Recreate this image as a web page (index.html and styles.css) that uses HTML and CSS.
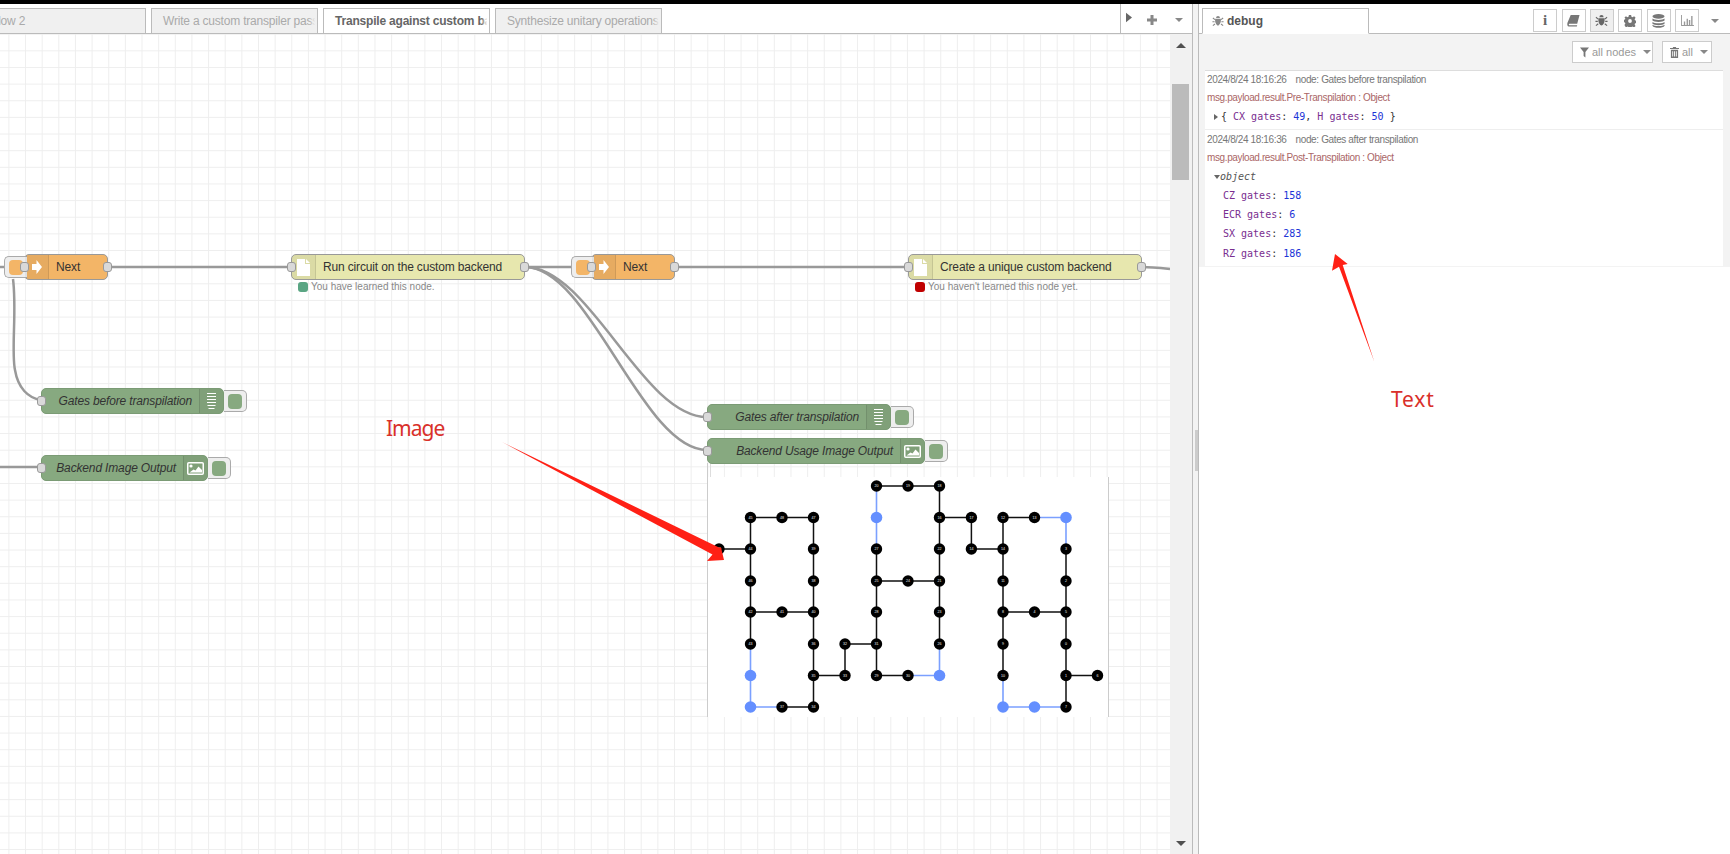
FILE: index.html
```html
<!DOCTYPE html>
<html lang="en">
<head>
<meta charset="utf-8">
<title>Node-RED flow</title>
<link rel="stylesheet" href="styles.css">
</head>
<body>
<div class="topbar"></div>
<div class="main">
  <section class="workspace">
    <div class="tabbar">
      <div class="tablist">
        <div class="tab tab-first"><span>Flow 2</span></div>
        <div class="tab"><span>Write a custom transpiler pass</span></div>
        <div class="tab tab-active"><span>Transpile against custom backend</span></div>
        <div class="tab"><span>Synthesize unitary operations</span></div>
      </div>
      <div class="tabtools">
        <svg class="tool-play" viewBox="0 0 7 11"><path d="M0 0l7 5.5L0 11z"/></svg>
        <svg class="tool-plus" viewBox="0 0 10 10"><path d="M3.5 0h3v3.5H10v3H6.5V10h-3V6.5H0v-3h3.5z"/></svg>
        <span class="caret"></span>
      </div>
    </div>
    <div class="canvas-row">
      <div class="canvas">
        <svg class="wires" width="1170" height="820" viewBox="0 34 1170 820">
          <defs>
            <pattern id="grid" x="8.4" y="33.7" width="16.64" height="16.64" patternUnits="userSpaceOnUse">
              <path d="M0.5 0V16.64M0 0.5H16.64" class="gridline"/>
            </pattern>
          </defs>
          <rect x="0" y="34" width="1170" height="820" fill="url(#grid)"/>
          <g class="wire">
            <path d="M0 267H4"/>
            <path d="M108 267H291"/>
            <path d="M525 267H571"/>
            <path d="M675 267H908"/>
            <path d="M1142 267C1150 267 1160 268 1170 269"/>
            <path d="M0 467H41"/>
            <path d="M13 279C17 310 11 352 15 370C18 388 28 398 41 400"/>
            <path d="M525 267C590 267 642 417 707 417"/>
            <path d="M525 267C590 267 642 450 707 450"/>
          </g>
        </svg>

        <div class="node node-next next-a">
          <div class="node-btn btn-left"></div>
          <i class="port port-l"></i>
          <div class="nicon nicon-l"><svg class="ico-link" viewBox="0 0 10 14"><path d="M0 4h4.500V0L10 7l-5.500 7v-4H0z"/></svg></div>
          <div class="nlabel">Next</div>
          <i class="port port-r"></i>
        </div>

        <div class="node node-comment run">
          <i class="port port-l"></i>
          <div class="nicon nicon-l"><svg class="ico-doc" viewBox="0 0 13 17"><path d="M0 0h8v5h5v12H0z"/><path d="M9 0l4 4H9z"/></svg></div>
          <div class="nlabel nlabel-wide">Run circuit on the custom backend</div>
          <i class="port port-r"></i>
          <div class="status"><b class="dot dot-green"></b><span>You have learned this node.</span></div>
        </div>

        <div class="node node-next next-b">
          <div class="node-btn btn-left"></div>
          <i class="port port-l"></i>
          <div class="nicon nicon-l"><svg class="ico-link" viewBox="0 0 10 14"><path d="M0 4h4.500V0L10 7l-5.500 7v-4H0z"/></svg></div>
          <div class="nlabel">Next</div>
          <i class="port port-r"></i>
        </div>

        <div class="node node-comment create">
          <i class="port port-l"></i>
          <div class="nicon nicon-l"><svg class="ico-doc" viewBox="0 0 13 17"><path d="M0 0h8v5h5v12H0z"/><path d="M9 0l4 4H9z"/></svg></div>
          <div class="nlabel nlabel-wide">Create a unique custom backend</div>
          <i class="port port-r"></i>
          <div class="status"><b class="dot dot-red"></b><span>You haven't learned this node yet.</span></div>
        </div>

        <div class="node node-debug gates-before">
          <i class="port port-l"></i>
          <div class="nlabel nlabel-end">Gates before transpilation</div>
          <div class="nicon nicon-r"><svg class="ico-list" viewBox="0 0 9 16"><path d="M0 .5h9M0 3.5h9M0 6.5h9M0 9.5h9M.5 12.5h8M1.5 15.500h6"/></svg></div>
          <div class="node-btn btn-right"></div>
        </div>

        <div class="node node-debug backend-out">
          <i class="port port-l"></i>
          <div class="nlabel nlabel-end">Backend Image Output</div>
          <div class="nicon nicon-r nicon-pic"><svg class="ico-pic" viewBox="0 0 17 13"><rect x=".75" y=".75" width="15.500" height="11.500" rx="1"/><circle cx="4" cy="4" r="1.600"/><path d="M2.500 10.500l4-3 2 1 3-4 3.500 3.500v2.500z"/></svg></div>
          <div class="node-btn btn-right"></div>
        </div>

        <div class="node node-debug gates-after">
          <i class="port port-l"></i>
          <div class="nlabel nlabel-end">Gates after transpilation</div>
          <div class="nicon nicon-r"><svg class="ico-list" viewBox="0 0 9 16"><path d="M0 .5h9M0 3.5h9M0 6.5h9M0 9.5h9M.5 12.5h8M1.5 15.500h6"/></svg></div>
          <div class="node-btn btn-right"></div>
        </div>

        <div class="node node-debug usage-out">
          <i class="port port-l"></i>
          <div class="nlabel nlabel-end">Backend Usage Image Output</div>
          <div class="nicon nicon-r nicon-pic"><svg class="ico-pic" viewBox="0 0 17 13"><rect x=".75" y=".75" width="15.500" height="11.500" rx="1"/><circle cx="4" cy="4" r="1.600"/><path d="M2.500 10.500l4-3 2 1 3-4 3.500 3.500v2.500z"/></svg></div>
          <div class="node-btn btn-right"></div>
        </div>

        <div class="img-stub"></div>
        <div class="output-image">
          <svg class="coupling" width="400" height="240" viewBox="0 0 400 240">
            <path class="edge" d="M168.500 9H231.500M231.500 9V167M42.500 40.500H105.500M231.500 40.500H263.400V72H295M295 40.500H326.500M11 72H42.500M42.500 40.500V167M105.500 40.500V230M168.500 72V198.500M295 40.500V198.500M358 72V230M168.500 104H231.500M42.500 135H105.500M295 135H358M137 167H168.500M137 167V198.500H105.500M168.500 198.500H200M358 198.500H389.500M74 230H105.500"/>
            <path class="edge-blue" d="M168.500 9V72M326.500 40.500H358V72M231.500 167V198.500H200M42.500 167V230H74M295 198.500V230H358"/>
            <g class="q">
              <circle cx="168.500" cy="9" r="5.700"/><circle cx="200" cy="9" r="5.700"/><circle cx="231.500" cy="9" r="5.700"/>
              <circle cx="42.500" cy="40.500" r="5.700"/><circle cx="74" cy="40.500" r="5.700"/><circle cx="105.500" cy="40.500" r="5.700"/><circle cx="231.500" cy="40.500" r="5.700"/><circle cx="263.400" cy="40.500" r="5.700"/><circle cx="295" cy="40.500" r="5.700"/><circle cx="326.500" cy="40.500" r="5.700"/>
              <circle cx="11" cy="72" r="5.700"/><circle cx="42.500" cy="72" r="5.700"/><circle cx="105.500" cy="72" r="5.700"/><circle cx="168.500" cy="72" r="5.700"/><circle cx="231.500" cy="72" r="5.700"/><circle cx="263.400" cy="72" r="5.700"/><circle cx="295" cy="72" r="5.700"/><circle cx="358" cy="72" r="5.700"/>
              <circle cx="42.500" cy="104" r="5.700"/><circle cx="105.500" cy="104" r="5.700"/><circle cx="168.500" cy="104" r="5.700"/><circle cx="200" cy="104" r="5.700"/><circle cx="231.500" cy="104" r="5.700"/><circle cx="295" cy="104" r="5.700"/><circle cx="358" cy="104" r="5.700"/>
              <circle cx="42.500" cy="135" r="5.700"/><circle cx="74" cy="135" r="5.700"/><circle cx="105.500" cy="135" r="5.700"/><circle cx="168.500" cy="135" r="5.700"/><circle cx="231.500" cy="135" r="5.700"/><circle cx="295" cy="135" r="5.700"/><circle cx="326.500" cy="135" r="5.700"/><circle cx="358" cy="135" r="5.700"/>
              <circle cx="42.500" cy="167" r="5.700"/><circle cx="105.500" cy="167" r="5.700"/><circle cx="137" cy="167" r="5.700"/><circle cx="168.500" cy="167" r="5.700"/><circle cx="231.500" cy="167" r="5.700"/><circle cx="295" cy="167" r="5.700"/><circle cx="358" cy="167" r="5.700"/>
              <circle cx="105.500" cy="198.500" r="5.700"/><circle cx="137" cy="198.500" r="5.700"/><circle cx="168.500" cy="198.500" r="5.700"/><circle cx="200" cy="198.500" r="5.700"/><circle cx="295" cy="198.500" r="5.700"/><circle cx="358" cy="198.500" r="5.700"/><circle cx="389.500" cy="198.500" r="5.700"/>
              <circle cx="74" cy="230" r="5.700"/><circle cx="105.500" cy="230" r="5.700"/><circle cx="358" cy="230" r="5.700"/>
            </g>
            <g class="q-blue">
              <circle cx="168.500" cy="40.500" r="5.800"/><circle cx="358" cy="40.500" r="5.800"/><circle cx="42.500" cy="198.500" r="5.800"/><circle cx="231.500" cy="198.500" r="5.800"/><circle cx="42.500" cy="230" r="5.800"/><circle cx="295" cy="230" r="5.800"/><circle cx="326.500" cy="230" r="5.800"/>
            </g>
            <g class="qt">
              <text x="168.500" y="10.300">20</text><text x="200" y="10.300">19</text><text x="231.500" y="10.300">18</text>
              <text x="42.500" y="41.800">45</text><text x="74" y="41.800">48</text><text x="105.500" y="41.800">47</text><text x="231.500" y="41.800">16</text><text x="263.400" y="41.800">17</text><text x="295" y="41.800">12</text><text x="326.500" y="41.800">13</text>
              <text x="11" y="73.300">49</text><text x="42.500" y="73.300">44</text><text x="105.500" y="73.300">39</text><text x="168.500" y="73.300">27</text><text x="231.500" y="73.300">22</text><text x="263.400" y="73.300">14</text><text x="295" y="73.300">14</text><text x="358" y="73.300">3</text>
              <text x="42.500" y="105.300">46</text><text x="105.500" y="105.300">38</text><text x="168.500" y="105.300">25</text><text x="200" y="105.300">24</text><text x="231.500" y="105.300">21</text><text x="295" y="105.300">11</text><text x="358" y="105.300">2</text>
              <text x="42.500" y="136.300">42</text><text x="74" y="136.300">41</text><text x="105.500" y="136.300">40</text><text x="168.500" y="136.300">28</text><text x="231.500" y="136.300">23</text><text x="295" y="136.300">8</text><text x="326.500" y="136.300">4</text><text x="358" y="136.300">5</text>
              <text x="42.500" y="168.300">43</text><text x="105.500" y="168.300">36</text><text x="137" y="168.300">32</text><text x="168.500" y="168.300">31</text><text x="231.500" y="168.300">26</text><text x="295" y="168.300">9</text><text x="358" y="168.300">0</text>
              <text x="105.500" y="199.800">35</text><text x="137" y="199.800">33</text><text x="168.500" y="199.800">29</text><text x="200" y="199.800">30</text><text x="295" y="199.800">10</text><text x="358" y="199.800">1</text><text x="389.500" y="199.800">6</text>
              <text x="74" y="231.300">37</text><text x="105.500" y="231.300">34</text><text x="358" y="231.300">7</text>
            </g>
          </svg>
        </div>
      </div>
      <div class="scrollbar">
        <div class="scroll-btn"><span class="arrow-up"></span></div>
        <div class="scroll-thumb"></div>
        <div class="scroll-btn scroll-btn-end"><span class="arrow-down"></span></div>
      </div>
    </div>
  </section>

  <div class="separator"><div class="sep-handle"></div></div>

  <aside class="sidebar">
    <div class="side-tabbar">
      <div class="side-tab">
        <svg class="ico-bug ico-bug-tab" viewBox="0 0 14 14"><path d="M4.700 3.500a2.300 2.300 0 0 1 4.600 0zM3.800 4.500h6.400c.4 1 .5 6.500-3.200 8-3.700-1.500-3.600-7-3.200-8z"/><path class="legs" d="M3.500 5.500L1 3.500M10.500 5.500L13 3.500M3 8H.5M11 8h2.500M3.500 10.500L1 12.500M10.500 10.500L13 12.500"/></svg>
        <span>debug</span>
      </div>
      <div class="side-tools">
        <div class="tbtn"><span class="info-i">i</span></div>
        <div class="tbtn"><svg class="tico" viewBox="0 0 14 14"><path d="M4 1h9.500l-2.500 9.500H2.500C1.800 10.500 1.800 12 2.500 12H11l-.4 1.500H2C.3 13.500 0 11.500.5 9.500z"/></svg></div>
        <div class="tbtn tbtn-on"><svg class="ico-bug" viewBox="0 0 14 14"><path d="M4.700 3.500a2.300 2.300 0 0 1 4.600 0zM3.800 4.500h6.400c.4 1 .5 6.500-3.200 8-3.700-1.500-3.600-7-3.200-8z"/><path class="legs" d="M3.500 5.500L1 3.500M10.500 5.500L13 3.500M3 8H.5M11 8h2.500M3.500 10.500L1 12.500M10.500 10.500L13 12.500"/></svg></div>
        <div class="tbtn"><svg class="tico tico-gear" viewBox="0 0 14 14"><path fill-rule="evenodd" d="M5.700 0h2.600l.4 2 1.300.6L11.800 1.500l1.700 1.800-1.100 1.700.5 1.300 2 .4v2.600l-2 .4-.5 1.300 1.100 1.700-1.700 1.800-1.800-1.100-1.300.5-.4 2H5.700l-.4-2-1.300-.5-1.800 1.100L.5 11.700l1.100-1.700-.5-1.300-2-.4V5.700l2-.4.5-1.300L.5 3.300 2.200 1.500 4 2.600l1.300-.6zM7 4.800a2.200 2.200 0 1 0 0 4.400 2.200 2.200 0 0 0 0-4.400z"/></svg></div>
        <div class="tbtn"><svg class="tico tico-db" viewBox="0 0 14 15"><ellipse cx="7" cy="2.500" rx="6.500" ry="2.500"/><path d="M.5 4.800C2 6.800 12 6.800 13.500 4.800V7C12 9 2 9 .5 7zM.5 8.500C2 10.500 12 10.500 13.500 8.500V10.500C12 12.500 2 12.500 .5 10.500zM.5 11.500C2 13.500 12 13.500 13.500 11.500V12.500C12 15.500 2 15.500 .5 12.500z"/></svg></div>
        <div class="tbtn"><svg class="tico tico-chart" viewBox="0 0 14 12"><path d="M0 0h1v11h13v1H0zM3 7h1.500v4H3zM6 4h1.500v7H6zM8.500 5.500H10V11H8.500zM11 1h1.500v10H11z"/></svg></div>
        <span class="caret caret-side"></span>
      </div>
    </div>
    <div class="debug">
      <div class="debug-bar">
        <div class="fbtn fbtn-nodes">
          <svg class="fico" viewBox="0 0 10 11"><path d="M0 0h10L6 5v6L4 9.500V5z"/></svg>
          <span>all nodes</span><span class="caret caret-f"></span>
        </div>
        <div class="fbtn fbtn-all">
          <svg class="fico" viewBox="0 0 10 12"><path d="M3.500 0h3l.5 1h3v1.200H0V1h3zM1 3h8v9H1zM2.500 4.500v6h1v-6zM4.500 4.500v6h1v-6zM6.500 4.500v6h1v-6z" fill-rule="evenodd"/></svg>
          <span>all</span><span class="caret caret-f"></span>
        </div>
      </div>
      <div class="messages">
        <div class="msg">
          <div class="meta"><span class="stamp">2024/8/24 18:16:26</span><span>node: Gates before transpilation</span></div>
          <div class="topic">msg.payload.result.Pre-Transpilation : Object</div>
          <div class="value value-line"><span class="tri-r"></span><span>{ <span class="k">CX gates</span>: <span class="n">49</span>, <span class="k">H gates</span>: <span class="n">50</span> }</span></div>
        </div>
        <div class="msg msg-open">
          <div class="meta"><span class="stamp">2024/8/24 18:16:36</span><span>node: Gates after transpilation</span></div>
          <div class="topic">msg.payload.result.Post-Transpilation : Object</div>
          <div class="value value-row"><span class="tri-d"></span><span class="obj">object</span></div>
          <div class="value value-row value-indent"><span class="k">CZ gates</span>: <span class="n">158</span></div>
          <div class="value value-row value-indent"><span class="k">ECR gates</span>: <span class="n">6</span></div>
          <div class="value value-row value-indent"><span class="k">SX gates</span>: <span class="n">283</span></div>
          <div class="value value-row value-indent value-last"><span class="k">RZ gates</span>: <span class="n">186</span></div>
        </div>
      </div>
    </div>
  </aside>
</div>

<div class="annotations">
  <svg class="arrows" width="1730" height="854" viewBox="0 0 1730 854">
    <path d="M502 442L719 547.500L721 547.500L724 560L707 561L712.500 554.500Z"/>
    <path d="M1335 254L1347.700 264L1342.700 265L1374.300 361.700L1339 266.700L1332 270.700Z"/>
  </svg>
  <span class="note note-image">Image</span>
  <span class="note note-text">Text</span>
</div>
</body>
</html>
```
FILE: styles.css
```css
* { box-sizing: border-box; }
html, body { margin: 0; height: 854px; overflow: hidden; background: #fff; }
body { font-family: "Liberation Sans", Arial, sans-serif; position: relative; color: #555; }

.topbar { height: 4px; background: #000; }
.main { display: flex; height: 850px; }

/* workspace */
.workspace { width: 1193px; display: flex; flex-direction: column; border-right: 1px solid #bbb; }
.tabbar { height: 30px; display: flex; border-bottom: 1px solid #bbb; flex: none; }
.tablist { flex: 1; min-width: 0; display: flex; gap: 5px; padding-top: 4px; overflow: hidden; position: relative; }
.tab {
  flex: none; width: 167px; height: 26px; padding: 5px 0 0 11px; margin-bottom: -1px;
  border: 1px solid #bbb; border-bottom-color: #bbb; background: #f0f0f0;
  font-size: 12px; letter-spacing: -0.2px; line-height: 15px; color: #aaa; white-space: nowrap; overflow: hidden; position: relative;
}
.tab::after { content: ""; position: absolute; right: 0; top: 0; bottom: 0; width: 8px; background: linear-gradient(to right, rgba(240,240,240,0), #f0f0f0 80%); }
.tab-first { width: 168px; margin-left: -22px; padding-left: 12px; }
.tab-active { background: #fff; border-bottom-color: #fff; color: #666; font-weight: bold; height: 26px; }
.tab-active::after { background: linear-gradient(to right, rgba(255,255,255,0), #fff 80%); }
.tabtools { width: 72px; flex: none; border-left: 1px solid #bbb; display: flex; align-items: center; position: relative; padding-top: 3px; }
.tool-play { width: 6px; height: 11px; fill: #666; margin-left: 5px; margin-top: -5px; }
.tool-plus { width: 10px; height: 10px; fill: #888; margin-left: 15px; }
.caret { width: 0; height: 0; border-left: 4px solid transparent; border-right: 4px solid transparent; border-top: 4px solid #888; }
.tabtools .caret { margin-left: 18px; }

.canvas-row { flex: 1; display: flex; min-height: 0; }
.canvas { width: 1170px; position: relative; overflow: hidden; background: #fff; isolation: isolate; }
.wires { position: absolute; left: 0; top: 0; display: block; }
.gridline { stroke: #eee; stroke-width: 1; fill: none; }
.wire path { fill: none; stroke: #999; stroke-width: 2.500; }

.scrollbar { width: 22px; background: #f1f1f1; display: flex; flex-direction: column; flex: none; }
.scroll-btn { height: 22px; display: flex; align-items: center; justify-content: center; flex: none; }
.scroll-btn-end { margin-top: auto; }
.scroll-thumb { height: 96px; width: 17px; margin: 28px 0 0 2px; background: #bbb; }
.arrow-up { width: 0; height: 0; border-left: 5px solid transparent; border-right: 5px solid transparent; border-bottom: 5px solid #505050; }
.arrow-down { width: 0; height: 0; border-left: 5px solid transparent; border-right: 5px solid transparent; border-top: 5px solid #505050; }

/* nodes */
.node { position: absolute; height: 26px; display: flex; border: 1px solid #999; border-radius: 5px; font-size: 12px; letter-spacing: -0.15px; color: #333; white-space: nowrap; z-index: 1; }
.node-next { background: #f3b567; }
.node-comment { background: #e7e7ae; }
.node-debug { background: #87a980; border-color: #7b9b75; font-style: italic; }
.next-a { left: 24px; top: 220px; width: 84px; }
.next-b { left: 591px; top: 220px; width: 84px; }
.run { left: 291px; top: 220px; width: 234px; }
.create { left: 908px; top: 220px; width: 234px; }
.gates-before { left: 41px; top: 354px; width: 183px; }
.backend-out { left: 41px; top: 421px; width: 167px; }
.gates-after { left: 707px; top: 370px; width: 184px; }
.usage-out { left: 707px; top: 404px; width: 218px; }

.nicon { flex: none; width: 24px; display: flex; align-items: center; justify-content: center; background: rgba(0,0,0,.05); }
.nicon-l { border-right: 1px solid rgba(0,0,0,.1); border-radius: 4px 0 0 4px; }
.nicon-r { border-left: 1px solid rgba(0,0,0,.1); border-radius: 0 4px 4px 0; }
.nlabel { flex: 1; padding-left: 7px; line-height: 24px; }
.nlabel-end { text-align: right; padding: 0 7px 0 0; }
.ico-link { width: 10px; height: 14px; fill: #fff; }
.ico-doc { width: 13px; height: 17px; fill: #fff; }
.ico-list { width: 9px; height: 16px; stroke: #fff; stroke-width: 1; fill: none; }
.ico-pic { width: 17px; height: 13px; }
.ico-pic rect { fill: none; stroke: #fff; stroke-width: 1.500; }
.ico-pic circle, .ico-pic path { fill: #fff; }

.port { position: absolute; top: 7px; width: 9px; height: 10px; background: #d9d9d9; border: 1px solid #999; border-radius: 3px; z-index: 2; }
.port-l { left: -5px; }
.port-r { right: -5px; }

.node-btn { position: absolute; top: 1px; width: 23px; height: 22px; background: #eee; border: 1px solid #aaa; border-radius: 5px; z-index: -1; }
.btn-right { right: -24px; border-left: none; border-radius: 0 5px 5px 0; }
.btn-left { left: -21px; border-right: none; border-radius: 5px 0 0 5px; }
.node-btn::after { content: ""; position: absolute; top: 3px; width: 14px; height: 15px; border-radius: 4px; }
.btn-right::after { left: 4px; background: #87a980; }
.btn-left::after { left: 4px; background: #f3b567; }

.status { position: absolute; left: 6px; top: 26px; display: flex; align-items: center; gap: 3px; font-size: 10px; letter-spacing: 0; font-style: normal; color: #888; line-height: 12px; }
.dot { width: 10px; height: 10px; border-radius: 3px; display: block; }
.dot-green { background: #5aa583; }
.dot-red { background: #c00000; }

/* picture node output */
.img-stub { position: absolute; left: 707px; top: 429px; width: 4px; height: 14px; border-left: 1px solid #ccc; border-right: 1px solid #ddd; }
.output-image { position: absolute; left: 707px; top: 443px; width: 402px; height: 240px; background: #fff; border-left: 1px solid #ccc; border-right: 1px solid #ccc; }
.coupling { position: absolute; left: 0; top: 0; display: block; }
.edge { fill: none; stroke: #111; stroke-width: 1.500; }
.edge-blue { fill: none; stroke: #7ba0ff; stroke-width: 1.600; }
.q circle { fill: #000; }
.q-blue circle { fill: #648fff; }
.qt text { font-family: "Liberation Sans", sans-serif; font-size: 3.600px; fill: #eee; text-anchor: middle; }

/* separator */
.separator { width: 6px; flex: none; background: #f3f3f3; border-right: 1px solid #bbb; position: relative; }
.sep-handle { position: absolute; left: 2px; top: 426px; width: 3px; height: 41px; background: #ccc; }

/* sidebar */
.sidebar { flex: 1; min-width: 0; display: flex; flex-direction: column; }
.side-tabbar { height: 30px; flex: none; display: flex; border-bottom: 1px solid #bbb; padding: 4px 0 0 3px; position: relative; }
.side-tab { width: 167px; height: 26px; border: 1px solid #bbb; border-bottom-color: #fff; background: #fff; display: flex; align-items: center; padding-left: 9px; gap: 3px; font-size: 12px; font-weight: bold; color: #555; }
.ico-bug { width: 13px; height: 13px; fill: #666; }
.ico-bug-tab { fill: #888; width: 12px; height: 12px; }
.ico-bug .legs { fill: none; stroke: #666; stroke-width: 1.200; }
.ico-bug-tab .legs { stroke: #888; }
.side-tools { margin-left: auto; display: flex; align-items: flex-start; gap: 4.400px; padding-top: 1px; }
.tbtn { width: 24px; height: 23px; border: 1px solid #ccc; background: #fff; display: flex; align-items: center; justify-content: center; }
.tbtn-on { background: #efefef; }
.tico { width: 13px; height: 13px; fill: #777; }
.tico-gear { width: 12px; height: 12px; }
.tico-db { height: 14px; }
.tico-chart { height: 11px; fill: #999; }
.info-i { font-family: "Liberation Serif", serif; font-weight: bold; font-size: 15px; color: #666; line-height: 1; }
.caret-side { margin: 10px 11px 0 7.500px; }

.debug { background: #f3f3f3; padding: 0 7px 1px 6px; }
.debug-bar { height: 36px; display: flex; justify-content: flex-end; gap: 9px; padding: 7px 11px 0 0; }
.fbtn { height: 22px; border: 1px solid #ccc; background: #fff; display: flex; align-items: center; font-size: 11px; color: #999; padding-left: 7px; white-space: nowrap; }
.fbtn-nodes { width: 81px; }
.fbtn-all { width: 50px; }
.fico { width: 9px; height: 11px; fill: #777; margin-right: 3px; flex: none; }
.caret-f { margin-left: 7px; border-top-color: #888; }

.messages { background: #fff; border-top: 1px solid #ddd; }
.msg { padding: 0 0 1px 2px; border-bottom: 1px solid #eee; }
.msg-open { padding-top: 1px; padding-bottom: 3px; border-bottom: none; }
.meta { height: 18px; line-height: 18px; font-size: 10px; letter-spacing: -0.37px; color: #777; white-space: nowrap; }
.stamp { margin-right: 9px; }
.topic { height: 17px; line-height: 17px; font-size: 10px; letter-spacing: -0.38px; color: #a66; white-space: nowrap; }
.msg-open .topic { height: 18px; }
.value { font-family: "DejaVu Sans Mono", "Liberation Mono", monospace; font-size: 10px; color: #333; white-space: pre; }
.value-line { height: 22px; line-height: 22px; padding-left: 7px; display: flex; align-items: center; }
.value-row { height: 19px; line-height: 19px; padding-left: 7px; display: flex; align-items: center; }
.value-indent { display: block; padding-left: 16px; }
.value-last { margin-top: 1px; }
.tri-r { width: 0; height: 0; border-top: 3.500px solid transparent; border-bottom: 3.500px solid transparent; border-left: 4px solid #666; margin-right: 3px; }
.tri-d { width: 0; height: 0; border-left: 3.500px solid transparent; border-right: 3.500px solid transparent; border-top: 4px solid #666; }
.obj { font-style: italic; color: #555; }
.k { color: #792e90; }
.n { color: #2033d6; }

/* hand-drawn annotations laid over the screenshot */
.annotations { position: absolute; left: 0; top: 0; width: 1730px; height: 854px; pointer-events: none; }
.arrows { position: absolute; left: 0; top: 0; display: block; }
.arrows path { fill: #ff2015; }
.note { position: absolute; font-family: "Noto Sans", sans-serif; font-size: 21px; line-height: 28px; color: #d9302a; }
.note-image { left: 386px; top: 414px; letter-spacing: -1px; }
.note-text { left: 1391px; top: 385px; letter-spacing: 0.8px; }
```
